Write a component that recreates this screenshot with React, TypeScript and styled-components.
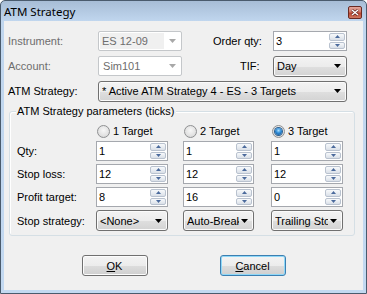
import React from "react";
import styled, { createGlobalStyle } from "styled-components";

const GlobalStyle = createGlobalStyle`
  html, body { margin: 0; padding: 0; background: #ffffff; }
  body { font-family: "Liberation Sans", Arial, sans-serif; font-size: 11px; color: #000; }
  * { box-sizing: border-box; }
`;

const Window = styled.div`
  width: 367px;
  height: 294px;
  display: flex;
  flex-direction: column;
  border: 1px solid #4a5b6d;
  border-radius: 5px 5px 0 0;
  background: linear-gradient(#a7bdd6 0px, #c0d6ee 20px, #c3d9f1 100%);
  padding: 0 3px 3px;
  overflow: hidden;
`;

const TitleBar = styled.div`
  height: 20px;
  flex: none;
  display: flex;
  align-items: center;
  justify-content: space-between;
`;

const Title = styled.span`
  font-family: "Noto Sans", "Open Sans", sans-serif;
  font-size: 11.5px;
  color: #000;
`;

const CloseButton = styled.div`
  width: 14px;
  height: 13px;
  margin-right: 1px;
  margin-top: 2px;
  border: 1px solid #6a2a22;
  border-radius: 2px;
  background: linear-gradient(#e3a79c 0%, #cf7868 45%, #b9442f 55%, #cf7a62 100%);
  display: flex;
  align-items: center;
  justify-content: center;
`;

const Client = styled.div`
  flex: 1;
  background: #f0f0f0;
  display: flex;
  flex-direction: column;
  padding: 10px 0 0 4px;
`;

const TopGrid = styled.div`
  display: grid;
  grid-template-columns: 90px 84px 31px 60px 74px;
  grid-auto-rows: 20px;
  row-gap: 5px;
  align-items: center;
`;

const Label = styled.span<{ $disabled?: boolean; $indent?: number }>`
  color: ${(p) => (p.$disabled ? "#6d6d6d" : "#000")};
  white-space: nowrap;
  padding-left: ${(p) => p.$indent ?? 0}px;
`;

const Combo = styled.div<{ $w?: number; $span?: string }>`
  width: ${(p) => (p.$w ? `${p.$w}px` : "auto")};
  grid-column: ${(p) => p.$span ?? "auto"};
  height: 21px;
  display: flex;
  align-items: center;
  gap: 2px;
  padding: 0 5px 0 3px;
  border: 1px solid #707070;
  border-radius: 3px;
  background: linear-gradient(#f3f3f3 0%, #ececec 50%, #dfdfdf 51%, #d3d3d3 100%);
  box-shadow: inset 0 0 0 1px #fbfbfb;
`;

const ComboText = styled.span`
  flex: 1;
  overflow: hidden;
  white-space: nowrap;
`;

const DisabledCombo = styled.div<{ $w: number }>`
  width: ${(p) => p.$w}px;
  height: 20px;
  display: flex;
  align-items: center;
  padding: 1px 5px 1px 1px;
  border: 1px solid #c4c7ca;
  border-radius: 2px;
  background: #ffffff;
  color: #6d6d6d;
`;

const DisabledText = styled.span`
  flex: 1;
  align-self: stretch;
  display: flex;
  align-items: center;
`;

const Highlight = styled.span`
  width: 64px;
  align-self: stretch;
  display: flex;
  align-items: center;
  padding-left: 2px;
  background: #f0f0f0;
`;

const Spin = styled.div<{ $w: number }>`
  width: ${(p) => p.$w}px;
  height: 20px;
  display: flex;
  border: 1px solid #a5a8ae;
  background: #ffffff;
`;

const SpinText = styled.span`
  flex: 1;
  padding-left: 2px;
  line-height: 18px;
  color: #000;
`;

const SpinButtons = styled.div`
  width: 17px;
  display: flex;
  flex-direction: column;
  gap: 1px;
  padding: 1px 1px 1px 0;
`;

const SpinButton = styled.div`
  flex: 1;
  border: 1px solid #b9c2cf;
  border-radius: 2px;
  background: linear-gradient(#f7f9fb 0%, #e9edf2 50%, #dae0e8 100%);
  display: flex;
  align-items: center;
  justify-content: center;
`;

const Group = styled.div`
  position: relative;
  margin: 10px 0 0 1px;
  width: 346px;
  height: 125px;
  border: 1px solid #d5dfe5;
  border-radius: 3px;
  box-shadow: inset 1px 1px 0 #ffffff;
  padding: 12px 0 0 7px;
`;

const Legend = styled.span`
  position: absolute;
  top: -7px;
  left: 6px;
  padding: 0 1px;
  background: #f0f0f0;
  white-space: nowrap;
`;

const ParamGrid = styled.div`
  display: grid;
  grid-template-columns: 79px 87px 88px 72px;
  grid-template-rows: 14px 20px 20px 20px 21px;
  row-gap: 3px;
  align-items: center;
`;

const RadioLabel = styled.div`
  display: flex;
  align-items: center;
  gap: 3px;
  padding-left: 1px;
  white-space: nowrap;
`;

const RadioCircle = styled.span`
  width: 13px;
  height: 13px;
  border-radius: 50%;
  border: 1px solid #8f9092;
  background: radial-gradient(circle at 50% 40%, #f7f7f7 0%, #e2e2e2 60%, #cfcfcf 100%);
  display: flex;
  align-items: center;
  justify-content: center;
`;

const RadioDot = styled.span`
  width: 7px;
  height: 7px;
  border-radius: 50%;
  background: radial-gradient(circle at 50% 35%, #a9e0ff 0%, #2d8ad6 45%, #0f4d8a 100%);
  box-shadow: 0 0 0 1px #2b5f8f;
`;

const ButtonRow = styled.div`
  display: flex;
  justify-content: center;
  gap: 72px;
  margin-top: 19px;
  padding-right: 4px;
`;

const Button = styled.div<{ $default?: boolean }>`
  width: 66px;
  height: 21px;
  display: flex;
  align-items: center;
  justify-content: center;
  border: 1px solid ${(p) => (p.$default ? "#3c7fb1" : "#707070")};
  border-radius: 3px;
  background: linear-gradient(#f3f3f3 0%, #ececec 50%, #dddddd 51%, #cfcfcf 100%);
  box-shadow: inset 0 0 0 1px ${(p) => (p.$default ? "#8fd8f8" : "#fcfcfc")};
  color: #000;
`;

const Arrow = ({ color = "#000" }: { color?: string }) => (
  <svg width="7" height="4" viewBox="0 0 7 4" style={{ flex: "none" }}>
    <path d="M0 0H7L3.5 4Z" fill={color} />
  </svg>
);

const SpinArrow = ({ up }: { up?: boolean }) => (
  <svg width="5" height="3" viewBox="0 0 5 3">
    <path d={up ? "M0 3H5L2.5 0Z" : "M0 0H5L2.5 3Z"} fill="#4b6a9c" />
  </svg>
);

const SpinBox = ({ value, w }: { value: string; w: number }) => (
  <Spin $w={w}>
    <SpinText>{value}</SpinText>
    <SpinButtons>
      <SpinButton>
        <SpinArrow up />
      </SpinButton>
      <SpinButton>
        <SpinArrow />
      </SpinButton>
    </SpinButtons>
  </Spin>
);

const DropDown = ({ text, w, span }: { text: string; w?: number; span?: string }) => (
  <Combo $w={w} $span={span}>
    <ComboText>{text}</ComboText>
    <Arrow />
  </Combo>
);

const Radio = ({ label, checked }: { label: string; checked?: boolean }) => (
  <RadioLabel>
    <RadioCircle>{checked && <RadioDot />}</RadioCircle>
    <span>{label}</span>
  </RadioLabel>
);

const rows: { label: string; values: string[] }[] = [
  { label: "Qty:", values: ["1", "1", "1"] },
  { label: "Stop loss:", values: ["12", "12", "12"] },
  { label: "Profit target:", values: ["8", "16", "0"] },
];

const widths = [72, 71, 72];

export default function App() {
  return (
    <>
      <GlobalStyle />
      <Window>
        <TitleBar>
          <Title>ATM Strategy</Title>
          <CloseButton>
            <svg width="8" height="7" viewBox="0 0 8 7">
              <path d="M1 1L7 6M7 1L1 6" stroke="#5a1f18" strokeWidth="2.6" />
              <path d="M1 1L7 6M7 1L1 6" stroke="#ffffff" strokeWidth="1.4" />
            </svg>
          </CloseButton>
        </TitleBar>
        <Client>
          <TopGrid>
            <Label $disabled>Instrument:</Label>
            <DisabledCombo $w={84}>
              <Highlight>ES 12-09</Highlight>
              <DisabledText />
              <Arrow color="#a8a8a8" />
            </DisabledCombo>
            <span />
            <Label>Order qty:</Label>
            <SpinBox value="3" w={74} />

            <Label $disabled>Account:</Label>
            <DisabledCombo $w={84}>
              <DisabledText>&nbsp;Sim101</DisabledText>
              <Arrow color="#a8a8a8" />
            </DisabledCombo>
            <span />
            <Label $indent={27}>TIF:</Label>
            <DropDown text="Day" w={74} />

            <Label>ATM Strategy:</Label>
            <DropDown text="* Active ATM Strategy 4 - ES - 3 Targets" span="2 / 6" w={249} />
          </TopGrid>

          <Group>
            <Legend>ATM Strategy parameters (ticks)</Legend>
            <ParamGrid>
              <span />
              <Radio label="1 Target" />
              <Radio label="2 Target" />
              <Radio label="3 Target" checked />
              {rows.map((r) => (
                <React.Fragment key={r.label}>
                  <Label>{r.label}</Label>
                  {r.values.map((v, i) => (
                    <SpinBox key={i} value={v} w={widths[i]} />
                  ))}
                </React.Fragment>
              ))}
              <Label>Stop strategy:</Label>
              <DropDown text="<None>" w={72} />
              <DropDown text="Auto-Breakeven" w={71} />
              <DropDown text="Trailing Stop" w={72} />
            </ParamGrid>
          </Group>

          <ButtonRow>
            <Button>
              <span>
                <u>O</u>K
              </span>
            </Button>
            <Button $default>
              <span>
                <u>C</u>ancel
              </span>
            </Button>
          </ButtonRow>
        </Client>
      </Window>
    </>
  );
}
